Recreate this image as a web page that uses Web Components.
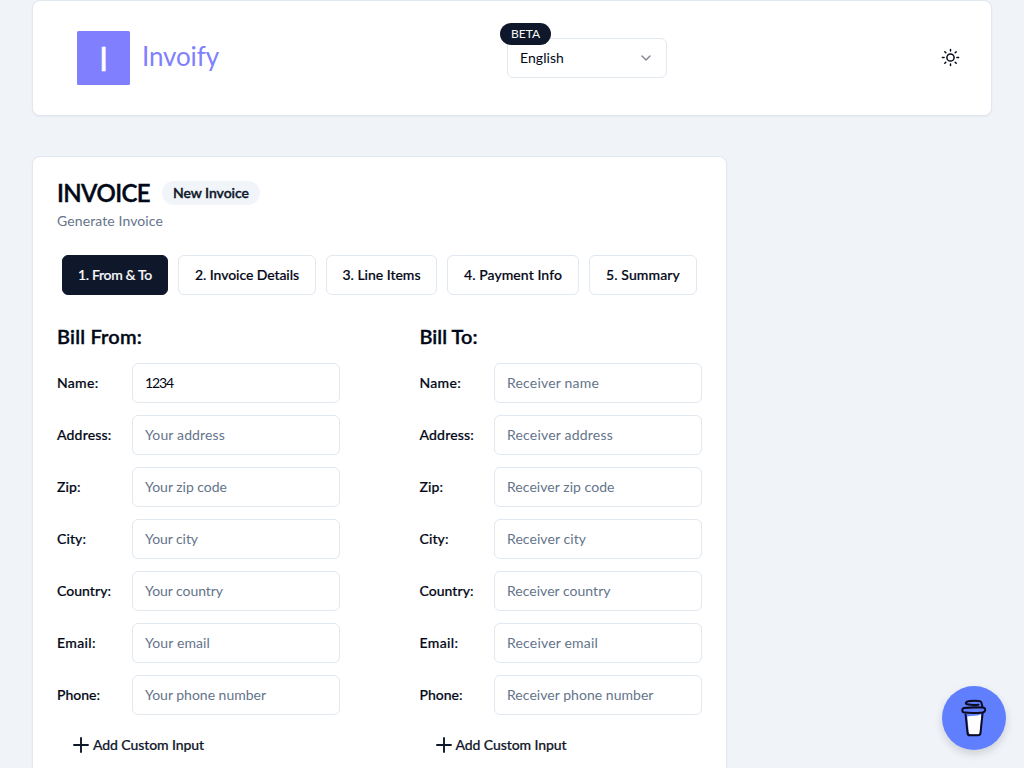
<!DOCTYPE html>
<html lang="en">
<head>
<meta charset="utf-8">
<title>Invoify</title>
<style>
html,body{margin:0;height:100%}
body{background:#f0f4f9;font:14px/20px Lato,"Open Sans",sans-serif;color:#020817;overflow:hidden}
</style>
</head>
<body>
<invoify-app></invoify-app>
<script>
const define=(name,html,setup)=>customElements.define(name,class extends HTMLElement{
  constructor(){super();this.attachShadow({mode:'open'});}
  connectedCallback(){
    this.shadowRoot.innerHTML=typeof html==='function'?html(this):html;
    if(setup)setup(this);
  }
});
const text=(t,w)=>`<track-text w="${w}">${t}</track-text>`;

// Text whose tracking is tuned so that the run takes exactly w pixels.
define('track-text','<style>:host{display:inline-block;white-space:nowrap}span{display:inline-block}</style><span><slot></slot></span>',el=>{
  const s=el.shadowRoot.querySelector('span'),w=+el.getAttribute('w');
  const n=[...el.textContent].length;
  el.style.width=w+'px';
  s.style.letterSpacing='0px';
  const d=(w-s.getBoundingClientRect().width)/n;
  s.style.letterSpacing=d.toFixed(3)+'px';
});

define('brand-logo',`<style>
:host{display:flex;align-items:center;color:#8080ff;gap:12px}
.m{width:53px;height:54px;border-radius:1.5px;background:#8080ff;color:#fff;display:flex;align-items:center;justify-content:center;font-size:33px;line-height:52px;-webkit-text-stroke:.4px}
.m track-text{margin-top:-1px}
.n{font-size:26px;line-height:34px;margin-top:-5px}
</style><div class="m">${text('I',9)}</div><div class="n">${text('Invoify',77)}</div>`);

define('language-select',`<style>
:host{display:block;position:relative;width:160px;height:40px}
.b{box-sizing:border-box;height:40px;border:1px solid #e2e8f0;border-radius:6px;padding:0 12px;display:flex;align-items:center;justify-content:space-between}
.t{position:absolute;left:-7px;top:-15px;height:22px;width:51px;border-radius:11px;background:#0f172a;color:#f8fafc;font-size:12px;line-height:22px;text-align:center}
</style><div class="b">${text('English',44)}<svg width="16" height="16" viewBox="0 0 24 24" fill="none" stroke="#020817" stroke-opacity=".5" stroke-width="2" stroke-linecap="round" stroke-linejoin="round"><path d="m6 9 6 6 6-6"/></svg></div>
<div class="t">${text('BETA',29)}</div>`);

define('theme-toggle',`<style>:host{display:block;width:19px;height:19px;margin-top:-1px}svg{display:block}</style>
<svg width="19" height="19" viewBox="-9.5 -9.5 19 19" fill="none" stroke="#020817" stroke-width="1.5"><circle r="3.6"/><path stroke-linecap="round" d="M0-8.1V-6.4M0 8.1V6.4M-8.1 0H-6.4M8.1 0H6.4M-5.7-5.7-4.7-4.7M5.7-5.7 4.7-4.7M-5.7 5.7-4.7 4.7M5.7 5.7 4.7 4.7"/></svg>`);

define('app-header',`<style>
:host{box-sizing:border-box;height:116px;background:#fff;border:1px solid #e2e8f0;border-radius:8px;box-shadow:0 1px 2px rgba(0,0,0,.05);display:grid;grid-template-columns:430px 1fr auto;align-items:center;padding:0 31px 0 44px}
</style><brand-logo></brand-logo><language-select></language-select><theme-toggle></theme-toggle>`);

define('step-button',`<style>
:host{box-sizing:border-box;height:40px;border:1px solid #e2e8f0;border-radius:6px;display:flex;align-items:center;justify-content:center;font-weight:500;-webkit-text-stroke:.2px}
:host([active]){background:#0f172a;border-color:#0f172a;color:#f8fafc}
</style><slot></slot>`);

define('form-field',`<style>
:host{display:grid;grid-template-columns:1fr 208px;align-items:center;height:40px}
label{font-weight:500;-webkit-text-stroke:.2px}
.i{box-sizing:border-box;height:40px;border:1px solid #e2e8f0;border-radius:6px;padding:9px 12px;color:#64748b}
:host([filled]) .i{color:#020817}
</style><label><slot name="label"></slot></label><div class="i"><slot></slot></div>`);

define('add-input',`<style>
:host{display:flex;align-items:center;height:40px;padding-left:16px;gap:4px;font-weight:500;color:#0f172a;-webkit-text-stroke:.2px}
svg{display:block}
</style><svg width="16" height="16" viewBox="0 0 16 16" stroke="#0f172a" stroke-width="1.9" stroke-linecap="round"><path d="M8 1V15M1 8H15"/></svg>${text('Add Custom Input',111)}`);

const bill={
 from:['Bill From:',85,[['Name:',41.5,'1234',28],['Address:',54.5,'Your address',80],['Zip:',23.5,'Your zip code',82],['City:',29,'Your city',53],['Country:',54,'Your country',78],['Email:',39,'Your email',65],['Phone:',43,'Your phone number',121]]],
 to:['Bill To:',58,[['Name:',41.5,'Receiver name',92],['Address:',54.5,'Receiver address',106],['Zip:',23.5,'Receiver zip code',107.5],['City:',29,'Receiver city',79],['Country:',54,'Receiver country',103.5],['Email:',39,'Receiver email',91],['Phone:',43,'Receiver phone number',146.5]]]
};
define('bill-section',el=>{
  const [title,w,rows]=bill[el.getAttribute('party')];
  return `<style>
:host{display:flex;flex-direction:column;gap:12px;width:283px}
:host([party=to]){width:282.5px}
h2{font-size:20px;line-height:26px;padding-bottom:2px;font-weight:600;margin:0;-webkit-text-stroke:.35px}
add-input{margin-top:-2px}
</style><h2>${text(title,w)}</h2>`+rows.map(([l,lw,p,pw])=>`<form-field${p==='1234'?' filled':''}><track-text slot="label" w="${lw}">${l}</track-text>${text(p,pw)}</form-field>`).join('')+'<add-input></add-input>';
});

define('invoice-card',`<style>
:host{box-sizing:border-box;display:block;width:695px;height:760px;background:#fff;border:1px solid #e2e8f0;border-radius:8px;box-shadow:0 1px 2px rgba(0,0,0,.05);padding:24px}
.head{display:flex;align-items:center;gap:12px;height:24px}
h1{font-size:24px;line-height:24px;font-weight:600;margin:0;-webkit-text-stroke:.4px}
.tag{height:24px;line-height:24px;border-radius:12px;background:#f1f5f9;padding:0 11px;font-weight:600;color:#0f172a;-webkit-text-stroke:.35px}
.sub{margin-top:6px;color:#64748b}
nav{display:grid;grid-template-columns:106px 138px 111px 132px 108px;gap:10px;padding-left:5px;margin-top:24px}
.cols{display:flex;justify-content:space-between;margin-top:28px}
</style>
<div class="head"><h1>${text('INVOICE',93)}</h1><div class="tag">${text('New Invoice',76)}</div></div>
<div class="sub">${text('Generate Invoice',106)}</div>
<nav><step-button active>${text('1. From &amp; To',74)}</step-button><step-button>${text('2. Invoice Details',104)}</step-button><step-button>${text('3. Line Items',78)}</step-button><step-button>${text('4. Payment Info',98)}</step-button><step-button>${text('5. Summary',74)}</step-button></nav>
<div class="cols"><bill-section party="from"></bill-section><bill-section party="to"></bill-section></div>`);

define('coffee-button',`<style>
:host{position:fixed;right:18px;bottom:18px;width:64px;height:64px;border-radius:50%;background:#5f7fff;box-shadow:0 4px 8px rgba(0,0,0,.15)}
svg{display:block}
</style><svg width="64" height="64" viewBox="0 0 64 64" fill="none" stroke="#0d0c23" stroke-width="2" stroke-linecap="round" stroke-linejoin="round">
<path d="M25.3 30.6Q29 29.8 32 29.8T39.5 28.3L37.8 46.5Q37.5 48.5 35.5 48.5H29Q27 48.5 26.8 46.5Z" fill="#fff" stroke="none"/>
<path d="M23.6 28.5 25.5 47Q25.8 49.3 28 49.3H36Q38.3 49.3 38.5 47L40.6 27"/>
<path d="M22 22Q20.3 22.3 20.3 24.5T22.5 26.5Q31 27.4 40.5 26.4 43.2 26 43.2 23.8T40.5 21.6Q31 21 22 22Z"/>
<path d="M36.5 18.7Q30 19.3 25.5 18.3 22.7 17.4 24.5 16 27 14.8 33 14.8 39 14.8 39.4 16.5L40.5 21"/>
</svg>`);

define('invoify-app',`<style>
:host{display:block;height:768px;overflow:hidden;padding:0 32px}
app-header{margin-bottom:40px}
</style><app-header></app-header><invoice-card></invoice-card><coffee-button></coffee-button>`);
</script>
</body>
</html>
